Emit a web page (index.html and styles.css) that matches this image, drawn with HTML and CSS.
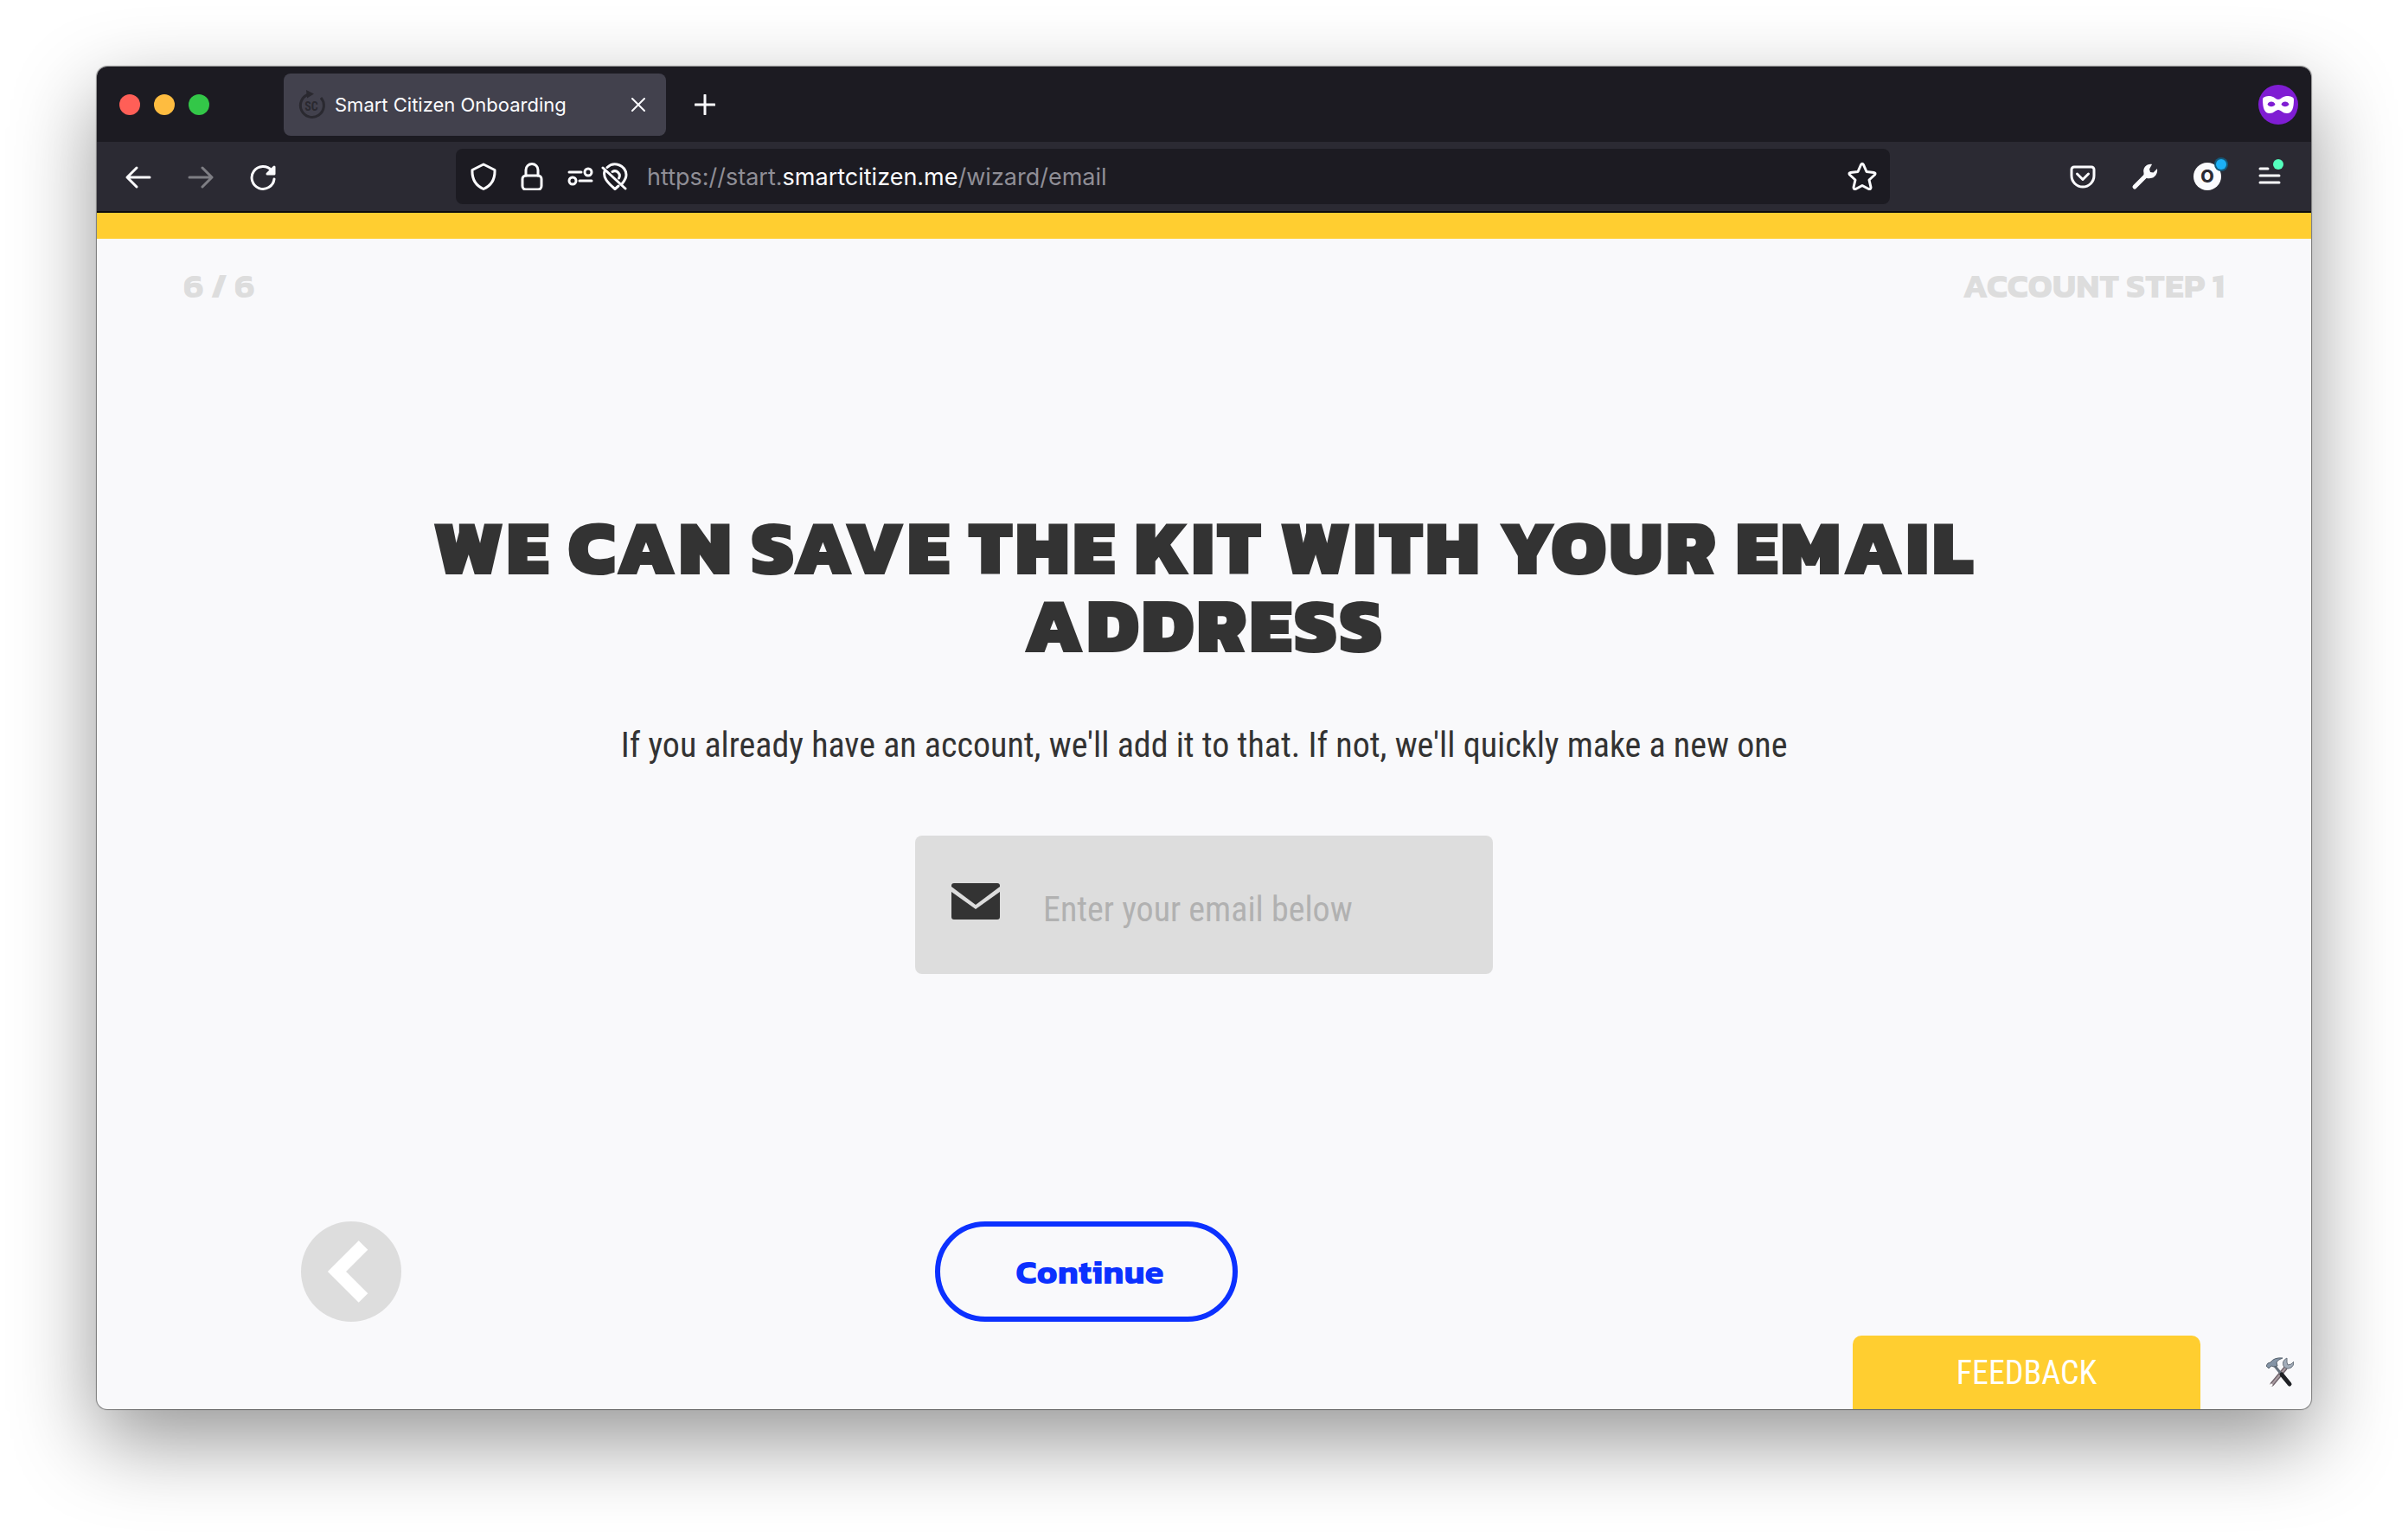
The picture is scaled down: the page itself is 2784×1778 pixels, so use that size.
FILE: index.html
```html
<!DOCTYPE html>
<html lang="en">
<head>
<meta charset="utf-8">
<title>Smart Citizen Onboarding</title>
<link rel="stylesheet" href="styles.css">
</head>
<body>
<div class="window">
  <header class="titlebar">
    <div class="lights">
      <button class="light light-close" aria-label="Close window"></button>
      <button class="light light-min" aria-label="Minimise window"></button>
      <button class="light light-max" aria-label="Zoom window"></button>
    </div>
    <div class="tab">
      <svg class="favicon" viewBox="0 0 32 34" fill="none" stroke="#2a2930" stroke-width="3"><path d="M27 9A13.500 13.500 0 1 1 13 5"/><path d="M10 0l9 4.500-8 5z" fill="#2a2930" stroke="none"/><text x="16" y="24" text-anchor="middle">SC</text></svg>
      <span class="tab-title">Smart Citizen Onboarding</span>
      <button class="tab-close" aria-label="Close tab"><svg width="16" height="16" viewBox="0 0 16 16" stroke="#fbfbfe" stroke-width="2" stroke-linecap="round"><path d="M1 1l14 14M15 1L1 15"/></svg></button>
    </div>
    <button class="new-tab" aria-label="New tab"><svg width="24" height="24" viewBox="0 0 24 24" stroke="#fbfbfe" stroke-width="3" stroke-linecap="round"><path d="M12 1v22M1 12h22"/></svg></button>
    <svg class="private" viewBox="0 0 46 46"><circle cx="23" cy="23" r="23" fill="#7f1dd3"/><path fill="#fff" fill-rule="evenodd" d="M5 17C5 14 9 13 13 13C18 13 20 17 23 17C26 17 28 13 33 13C37 13 41 14 41 17C41 27 39 33 33 33C28 33 26 29 23 29C20 29 18 33 13 33C7 33 5 27 5 17ZM10.500 22.500C12 18.500 18 18.500 19.500 22.500C18 26 12 26 10.500 22.500ZM26.500 22.500C28 18.500 34 18.500 35.500 22.500C34 26 28 26 26.500 22.500Z"/></svg>
  </header>

  <nav class="toolbar" aria-label="Browser">
    <div class="tools">
      <button class="tool" aria-label="Back"><svg width="32" height="32" viewBox="0 0 32 32"><path d="M29 17H3M14 6L3 17l11 11"/></svg></button>
      <button class="tool tool-off" aria-label="Forward" disabled><svg width="32" height="32" viewBox="0 0 32 32"><path d="M3 17h26M18 6l11 11-11 11"/></svg></button>
      <button class="tool" aria-label="Reload"><svg width="32" height="32" viewBox="0 0 32 32"><path d="M26 9A13 13 0 1 0 29 19"/><path d="M29 5v8h-8z" fill="#fbfbfe"/></svg></button>
    </div>
    <div class="urlbar">
      <svg class="url-icon" viewBox="0 0 32 32"><path d="M16 2l13 6.500C29.500 19 26 26 16 30.500C6 26 2.500 19 3 8.500Z"/></svg>
      <svg class="url-icon url-lock" viewBox="0 0 32 32"><path d="M9 15V8.500a7 7 0 0 1 14 0V15"/><rect x="5" y="15" width="22" height="16" rx="4"/></svg>
      <svg class="url-icon" viewBox="0 0 32 32"><path d="M3 11h14M15 21h14"/><circle cx="25" cy="11" r="4"/><circle cx="7" cy="21" r="4"/></svg>
      <svg class="url-icon" viewBox="0 0 32 32"><path d="M7 5.500A13 13 0 0 1 29 14C29 18 27 21 24.500 24M4 10C2 17 7 23 16 30.500L20 27M2 6l26 24M13 10.500A5.500 5.500 0 0 1 20.500 18"/></svg>
      <div class="address" role="textbox" aria-label="Address">https://start.<b>smartcitizen.me</b>/wizard/email</div>
      <button class="bookmark" aria-label="Bookmark"><svg width="34" height="34" viewBox="0 0 34 34"><path d="M15.500 3.500q1.500-2.500 3 0l3.500 8 8.500 1q2.500.5 1 2.500l-6.500 6 2 8.500q0 2.500-2.500 2L17 27.500 9.500 31.500q-2.500.5-2.500-2L9 21 2.500 15q-1.500-2 1-2.500l8.500-1z"/></svg></button>
    </div>
    <div class="tools">
      <button class="tool" aria-label="Pocket"><svg width="32" height="32" viewBox="0 0 32 32"><path d="M6 5h20a3 3 0 0 1 3 3v7a13 13 0 0 1-26 0V8a3 3 0 0 1 3-3zM9.500 13l6.500 6.500 6.500-6.500"/></svg></button>
      <button class="tool" aria-label="Developer tools"><svg width="32" height="32" viewBox="0 0 32 32"><path d="M4 28L17 15" stroke-width="5"/><path fill="#fbfbfe" stroke="none" d="M24 2C18 1 13 6 14.500 12C14 17 18 19 22 18C27 18 31 13 30 7L25.500 11.500L22 11L21 7.500Z"/></svg></button>
      <button class="tool" aria-label="Account"><span class="avatar">O</span><i class="dot dot-blue"></i></button>
      <button class="tool" aria-label="Menu"><svg width="32" height="32" viewBox="0 0 32 32"><path d="M5 7h9M5 15h22M5 23h22"/></svg><i class="dot dot-green"></i></button>
    </div>
  </nav>

  <main class="page">
    <div class="progress"></div>
    <div class="step"><span>6 / 6</span><span>ACCOUNT STEP 1</span></div>
    <section class="content">
      <h1>WE CAN SAVE THE KIT WITH YOUR EMAIL ADDRESS</h1>
      <p>If you already have an account, we'll add it to that. If not, we'll quickly make a new one</p>
      <label class="email">
        <svg width="56" height="42" viewBox="0 0 56 42" fill="#333"><path d="M0 10l28 20 28-20v29a3 3 0 0 1-3 3H3a3 3 0 0 1-3-3z"/><path d="M3 0h50a3 3 0 0 1 3 3v1L28 25 0 4V3a3 3 0 0 1 3-3z"/></svg>
        <input type="email" placeholder="Enter your email below" aria-label="Email">
      </label>
    </section>
    <div class="actions">
      <button class="back" aria-label="Previous step"><svg width="116" height="116" viewBox="0 0 116 116"><path d="M72 27.500L41.500 58 72 88.500" fill="none" stroke="#fff" stroke-width="15"/></svg></button>
      <button class="continue">Continue</button>
    </div>
    <footer class="footer">
      <button class="feedback">FEEDBACK</button>
      <svg class="repair" viewBox="0 0 32 36"><path d="M22 13L7 31" stroke="#6d6068" stroke-width="5" stroke-linecap="round"/><path d="M22 13L7 31" stroke="#a99ca2" stroke-width="2" stroke-linecap="round"/><path d="M9 9l9 11" stroke="#66707c" stroke-width="3"/><path d="M18 20l9 11" stroke="#1f2125" stroke-width="5" stroke-linecap="round"/><path d="M0 10l2-3 3-1q4-6 14-5-6 2-7 5l1 4-4 1-3-1-3 3z" fill="#8494a6" stroke="#56616d" stroke-width="1"/><path d="M24 1q-6 3-4 9 3 5 9 2 3-2 3-7l-3 3-4 1-1-3z" fill="#a3adba" stroke="#68717c" stroke-width="1"/><circle cx="6" cy="32" r="1.500" fill="#fff"/></svg>
    </footer>
  </main>
</div>
</body>
</html>
```
FILE: styles.css
```css
* { box-sizing: border-box; }

body {
  margin: 0;
  min-height: 100vh;
  padding: 77px 112px 149px;
  display: flex;
  background: #fff;
  font-family: "Roboto Condensed", Roboto, sans-serif;
  color: #333;
}

button {
  margin: 0;
  padding: 0;
  border: 0;
  background: none;
  font: inherit;
  color: inherit;
}

svg { display: block; flex: none; }

.window {
  flex: 1;
  display: flex;
  flex-direction: column;
  overflow: hidden;
  border-radius: 12px;
  background: #f9f9fb;
  box-shadow: 0 0 1px 1px rgba(0, 0, 0, .4), 0 36px 96px rgba(0, 0, 0, .42);
}

.titlebar {
  display: flex;
  align-items: center;
  height: 87px;
  padding: 0 15px 0 26px;
  background: #1c1b22;
  color: #fbfbfe;
  font-family: Inter, sans-serif;
}

.lights { display: flex; gap: 16px; }
.light { width: 24px; height: 24px; border-radius: 50%; }
.light-close { background: #ff5f57; }
.light-min { background: #febc40; }
.light-max { background: #33c748; }

.tab {
  display: flex;
  align-items: center;
  width: 442px;
  height: 72px;
  margin-left: 86px;
  padding: 0 24px 0 16px;
  border-radius: 8px;
  background: #42414d;
}

.favicon { width: 32px; height: 34px; }

.favicon text {
  fill: #2a2930;
  stroke: none;
  font: 700 14px "Roboto Condensed", Roboto, sans-serif;
}

.tab-title { flex: 1; margin-left: 11px; font-size: 22px; line-height: 28px; }
.new-tab { margin-left: 33px; }
.private { width: 46px; height: 46px; margin-left: auto; }

.toolbar {
  display: flex;
  align-items: center;
  height: 82px;
  padding: 0 12px;
  border-bottom: 2px solid #0c0c0d;
  background: #2b2a33;
}

.toolbar svg {
  fill: none;
  stroke: #fbfbfe;
  stroke-width: 3;
  stroke-linecap: round;
  stroke-linejoin: round;
}

.tools { display: flex; }

.tool {
  position: relative;
  display: flex;
  align-items: center;
  justify-content: center;
  width: 72px;
  height: 64px;
}

.tool-off { opacity: .4; }

.avatar {
  width: 32px;
  height: 32px;
  border-radius: 50%;
  background: #fbfbfe;
  font: 800 20px/32px Inter, sans-serif;
  color: #2b2a33;
}

.dot {
  position: absolute;
  top: 12px;
  right: 14px;
  width: 12px;
  height: 12px;
  border-radius: 50%;
}

.dot-blue { background: #1cb0f6; box-shadow: 0 0 0 2px #14597a; }
.dot-green { right: 20px; background: #54ffbd; }

.urlbar {
  flex: 1;
  display: flex;
  align-items: center;
  gap: 8px;
  height: 64px;
  margin: 0 187px;
  padding: 0 15px 0 16px;
  border-radius: 8px;
  background: #1c1b22;
}

.url-icon { width: 32px; height: 32px; }
.url-lock { margin: 0 16px; }

.address {
  flex: 1;
  margin-left: 13px;
  padding-top: 2px;
  font: 27px/32px Inter, sans-serif;
  color: #8f8e96;
}

.address b { font-weight: 400; color: #fbfbfe; }

.page { flex: 1; display: flex; flex-direction: column; }
.progress { height: 30px; background: #ffce30; }

.step {
  display: flex;
  justify-content: space-between;
  padding: 24px 100px 0;
  font: 700 40px/60px Kanit, Inter, sans-serif;
  color: #ddd;
}

.content {
  display: flex;
  flex-direction: column;
  align-items: center;
  padding: 228px 360px 0;
  text-align: center;
}

h1 {
  margin: 0;
  font: 900 90px/90px Kanit, Inter, sans-serif;
  letter-spacing: 2px;
}

p { margin: 64px 0 0; font-size: 40px; line-height: 60px; }

.email {
  display: flex;
  align-items: center;
  width: 668px;
  height: 160px;
  margin-top: 74px;
  padding: 0 42px;
  border-radius: 8px;
  background: #ddd;
}

.email svg { margin-bottom: 8px; }

.email input {
  flex: 1;
  min-width: 0;
  height: 60px;
  margin: 10px 0 0 46px;
  padding: 0 4px;
  border: 0;
  background: none;
  font: inherit;
  font-size: 40px;
  color: #333;
}

.email input::placeholder { color: #b1b1b1; opacity: 1; }

.actions {
  display: grid;
  grid-template-columns: 1fr auto 1fr;
  margin-top: auto;
  padding: 0 508px 0 236px;
}

.back { width: 116px; height: 116px; border-radius: 50%; background: #ddd; }

.continue {
  width: 350px;
  height: 116px;
  padding-left: 8px;
  border: 6px solid #0c31ff;
  border-radius: 58px;
  font: 700 40px/60px Kanit, Inter, sans-serif;
  color: #0c31ff;
}

.footer {
  display: flex;
  align-items: center;
  justify-content: flex-end;
  gap: 76px;
  margin-top: 16px;
  padding-right: 20px;
}

.feedback {
  width: 402px;
  height: 85px;
  border-radius: 10px 10px 0 0;
  background: #ffce30;
  font-size: 38px;
  color: #fff;
}

.repair { width: 32px; height: 36px; fill: none; }
```
